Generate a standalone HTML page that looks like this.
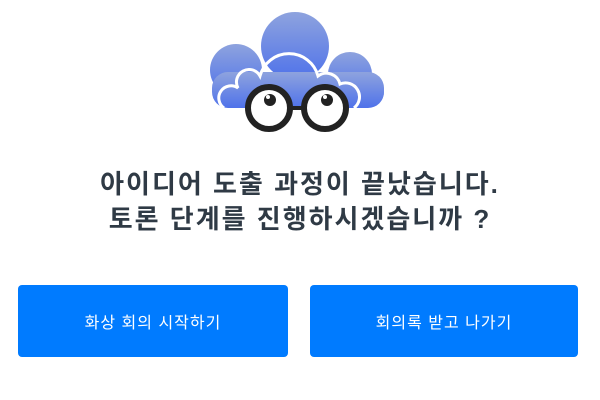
<!DOCTYPE html>
<html><head><meta charset="utf-8"><style>
body{margin:0;width:600px;height:400px;background:#fff;position:relative;font-family:"Liberation Sans","Noto Sans CJK KR",sans-serif;overflow:hidden}
.t{position:absolute;left:0;width:600px;text-align:center;font-size:26px;font-weight:bold;color:#2f3a45;letter-spacing:2px}
.b{position:absolute;top:285px;height:72px;background:#007bff;border-radius:4px;color:#fff;font-size:16px;letter-spacing:1px;display:flex;align-items:center;justify-content:center}
</style></head><body>
<svg width="600" height="140" style="position:absolute;left:0;top:0">
<defs><linearGradient id="g" x1="0" y1="0" x2="0" y2="1"><stop offset="0" stop-color="#8ea3de"/><stop offset="1" stop-color="#4f72ea"/></linearGradient></defs>
<g fill="url(#g)">
<circle cx="295" cy="46" r="34"/><circle cx="236" cy="70" r="26"/><circle cx="350" cy="74" r="22"/><circle cx="370" cy="92" r="14"/>
<rect x="212" y="72" width="172" height="36" rx="16"/>
</g>
<path d="M224 108 a11 11 0 0 1 14 -20 a12 12 0 0 1 22 -12 a30 30 0 0 1 58 0 a14 14 0 0 1 22 8 a14 14 0 0 1 14 24" fill="none" stroke="#fff" stroke-width="3"/>
<g fill="#fff" stroke="#222" stroke-width="6"><circle cx="269" cy="108" r="21"/><circle cx="325" cy="108" r="21"/></g>
<line x1="290" y1="108" x2="304" y2="108" stroke="#222" stroke-width="4"/>
<circle cx="270" cy="100" r="6" fill="#222"/><circle cx="327" cy="100" r="6" fill="#222"/>
<circle cx="268" cy="97" r="2" fill="#fff"/><circle cx="325" cy="97" r="2" fill="#fff"/>
</svg>
<div class="t" style="top:164px">아이디어 도출 과정이 끝났습니다.</div>
<div class="t" style="top:199px">토론 단계를 진행하시겠습니까 ?</div>
<div class="b" style="left:18px;width:270px">화상 회의 시작하기</div>
<div class="b" style="left:310px;width:268px">회의록 받고 나가기</div>
</body></html>
